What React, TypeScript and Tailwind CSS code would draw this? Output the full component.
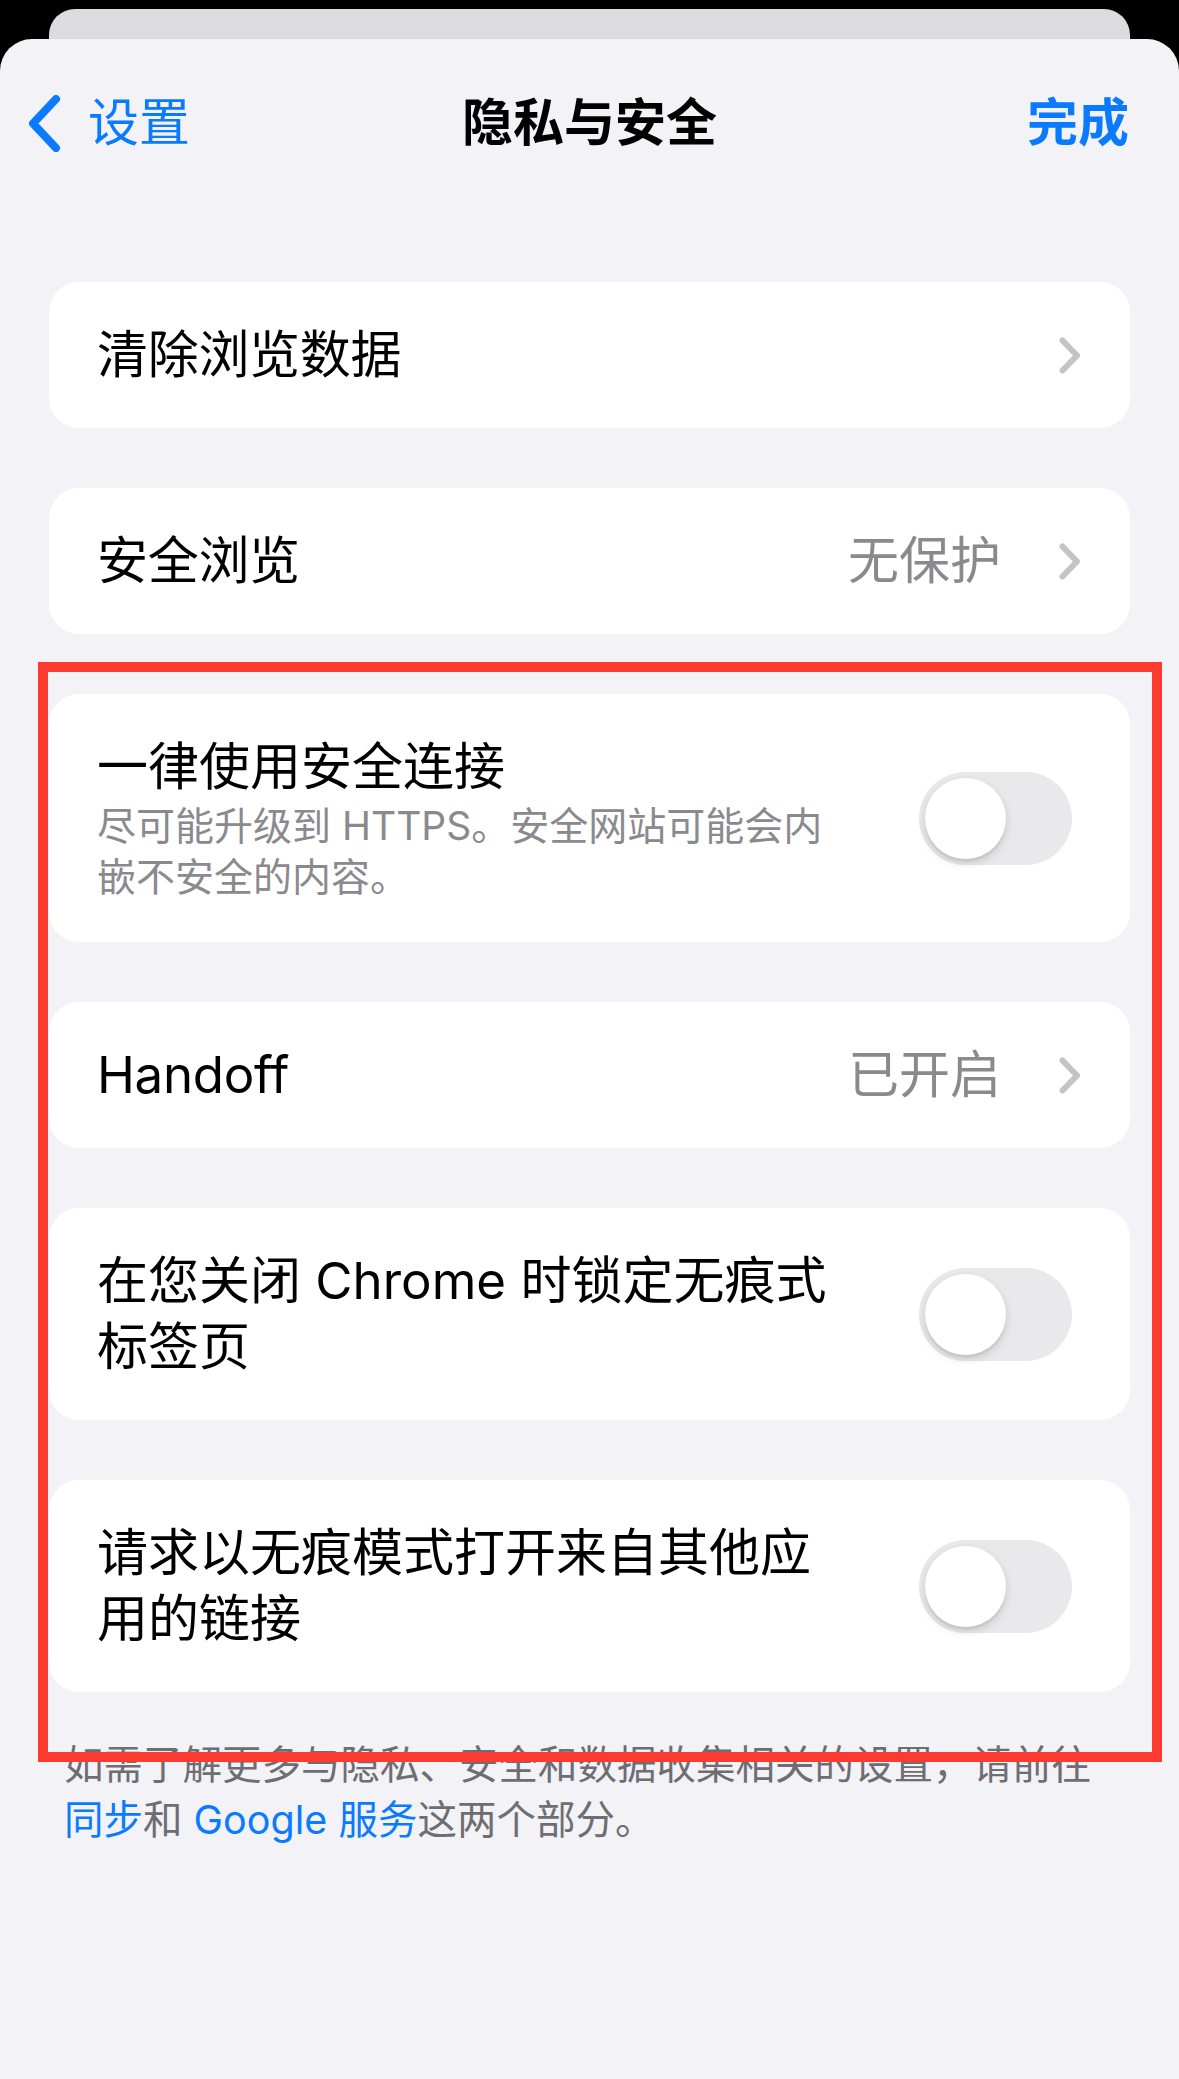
import React from "react";

function Chevron() {
  return (
    <svg width="22" height="37" viewBox="0 0 22 37" fill="none" className="shrink-0">
      <path d="M3.5 3.5 L18 18.5 L3.5 33.5" stroke="#c4c4c7" strokeWidth="6" strokeLinecap="round" strokeLinejoin="round" />
    </svg>
  );
}

function Toggle() {
  return (
    <div className="mr-[10px] flex h-[93px] w-[153px] shrink-0 items-center rounded-full bg-[#e9e9eb] p-[6px]">
      <div className="h-[81px] w-[81px] rounded-full bg-white shadow-[0_4px_10px_rgba(0,0,0,0.14),0_3px_1px_rgba(0,0,0,0.05)]" />
    </div>
  );
}

function LinkRow({ label, value }: { label: string; value?: string }) {
  return (
    <div className="mx-[49px] flex items-center rounded-[30px] bg-white py-[40px] pl-[48px] pr-[49px]">
      <span className="flex-1 text-[51px] leading-[66px] tracking-[-0.3px] text-black">{label}</span>
      {value && <span className="mr-[58px] text-[51px] leading-[66px] text-[#8a8a8e]">{value}</span>}
      <Chevron />
    </div>
  );
}

function ToggleRow({ children }: { children: React.ReactNode }) {
  return (
    <div className="mx-[49px] flex items-center rounded-[30px] bg-white py-[40px] pl-[48px] pr-[48px]">
      <div className="min-w-0 flex-1">{children}</div>
      <Toggle />
    </div>
  );
}

export default function App() {
  return (
    <div className="relative min-h-[2079px] w-[1179px] bg-black pt-[9px] font-['Inter','Noto_Sans_CJK_SC',sans-serif]">
      <div className="mx-[49px] h-[30px] rounded-t-[26px] bg-[#dcdcde]" />
      <div className="min-h-[2040px] rounded-t-[32px] bg-[#f2f2f7] pt-[34px]">
        {/* nav */}
        <div className="grid h-[100px] grid-cols-[1fr_auto_1fr] items-center">
          <div className="flex items-center pl-[28px]">
            <svg width="34" height="57" viewBox="0 0 34 57" fill="none">
              <path d="M28 4 L5 28.5 L28 53" stroke="#0a7aff" strokeWidth="8" strokeLinecap="round" strokeLinejoin="round" />
            </svg>
            <span className="ml-[26px] text-[51px] text-[#0a7aff]">设置</span>
          </div>
          <h1 className="text-[51px] font-semibold text-black">隐私与安全</h1>
          <div className="flex justify-end pr-[50px]">
            <span className="text-[51px] font-semibold text-[#0a7aff]">完成</span>
          </div>
        </div>

        <div className="mt-[109px] flex flex-col gap-[60px]">
          <LinkRow label="清除浏览数据" />
          <LinkRow label="安全浏览" value="无保护" />
          <ToggleRow>
            <div className="text-[51px] leading-[66px] text-black">一律使用安全连接</div>
            <div className="text-[39px] leading-[51px] text-[#8a8a8e]">
              尽可能升级到 HTTPS。安全网站可能会内
              <br />
              嵌不安全的内容。
            </div>
          </ToggleRow>
          <LinkRow label="Handoff" value="已开启" />
          <ToggleRow>
            <div className="text-[51px] leading-[66px] text-black">
              在您关闭 Chrome 时锁定无痕式
              <br />
              标签页
            </div>
          </ToggleRow>
          <ToggleRow>
            <div className="text-[51px] leading-[66px] text-black">
              请求以无痕模式打开来自其他应
              <br />
              用的链接
            </div>
          </ToggleRow>
        </div>

        <p className="mt-[46px] px-[64px] text-[39.5px] leading-[55px] text-[#6d6d72]">
          如需了解更多与隐私、安全和数据收集相关的设置，请前往
          <br />
          <span className="text-[#0a7aff]">同步</span>和 <span className="text-[#0a7aff]">Google 服务</span>这两个部分。
        </p>
      </div>

      {/* annotation frame */}
      <div className="pointer-events-none absolute left-[38px] top-[662px] h-[1100px] w-[1124px] border-[10px] border-[#fb3b30]" />
    </div>
  );
}
